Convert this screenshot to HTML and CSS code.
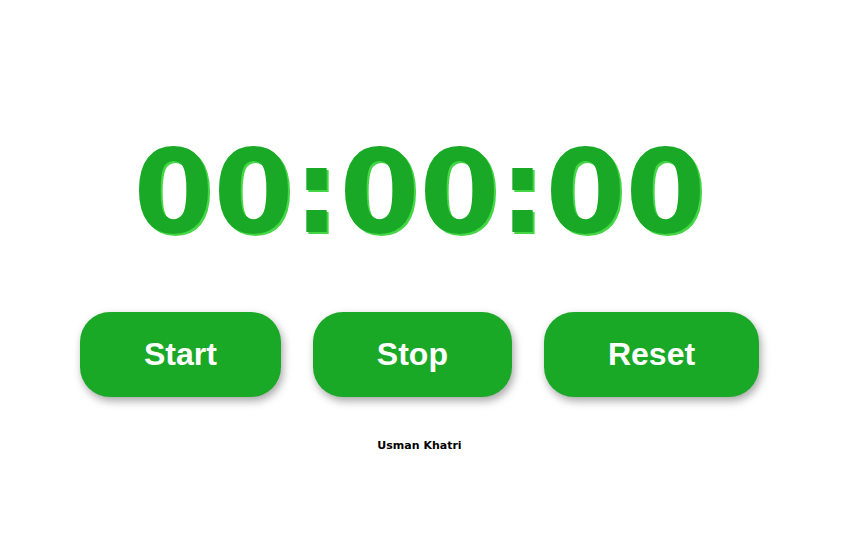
FILE: index.html
```html
<!DOCTYPE html>
<html>
<head>
<meta charset="utf-8">
<link rel="stylesheet" href="styles.css">
</head>
<body>
<main class="app">
  <div class="timer">00:00:00</div>
  <div class="controls">
    <button class="btn">Start</button>
    <button class="btn">Stop</button>
    <button class="btn">Reset</button>
  </div>
  <p class="author">Usman Khatri</p>
</main>
</body>
</html>
```
FILE: styles.css
```css
html, body {
  margin: 0;
  padding: 0;
  background: #ffffff;
}
.app {
  display: flex;
  flex-direction: column;
  align-items: center;
  padding-top: 124px;
  padding-right: 10px;
}
.timer {
  font-family: "DejaVu Sans", Verdana, sans-serif;
  font-weight: bold;
  font-size: 115px;
  line-height: 136px;
  color: #19a927;
  text-shadow: 2px 2px 0 #45d645;
}
.controls {
  display: flex;
  gap: 32px;
  margin-top: 52px;
}
.btn {
  font-family: "Liberation Sans", Arial, sans-serif;
  font-weight: bold;
  font-size: 32px;
  line-height: 37px;
  color: #ffffff;
  background: #19a927;
  border: none;
  border-radius: 30px;
  padding: 24px 64px;
  box-shadow: 2px 4px 8px rgba(0, 0, 0, 0.35);
}
.author {
  font-family: "DejaVu Sans", Verdana, sans-serif;
  font-weight: bold;
  font-size: 11px;
  line-height: 13px;
  margin: 42px 0 0;
  color: #000;
}
```
